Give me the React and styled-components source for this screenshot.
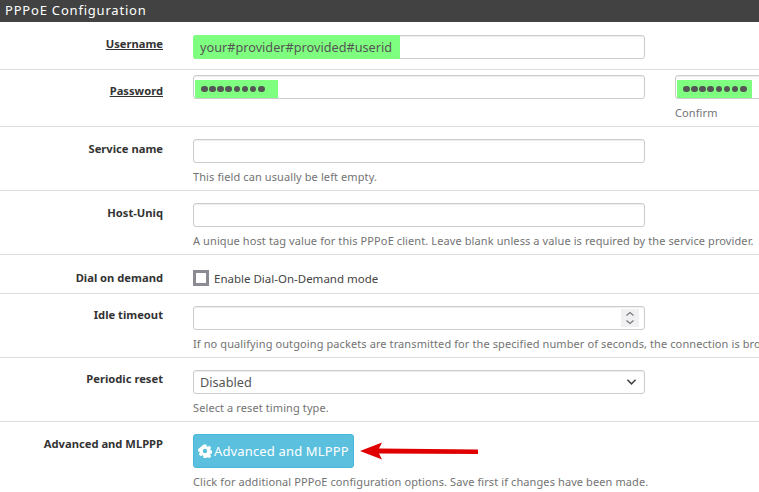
import React from "react";
import styled, { createGlobalStyle } from "styled-components";

const Global = createGlobalStyle`
html, body {
	margin: 0;
	padding: 0;
	background: #fff;
	overflow: hidden;
}
body {
	font-family: "Noto Sans", "Open Sans", sans-serif;
	font-size: 12px;
	color: #555;
}
`;

const Page = styled.div`
	width: 759px;
	height: 492px;
	overflow: hidden;
`;

const Heading = styled.h2`
	margin: 0;
	height: 22px;
	padding: 0 0 0 5px;
	background: #424242;
	color: #fff;
	font-size: 13px;
	font-weight: 400;
	letter-spacing: 0.8px;
	line-height: 21px;
`;

const Row = styled.div`
	display: grid;
	grid-template-columns: 163px 452px 200px;
	column-gap: 30px;
	height: ${(p) => p.$height}px;
	padding-top: ${(p) => p.$top}px;
	box-sizing: border-box;
	border-bottom: ${(p) => (p.$last ? "0" : "1px solid #ddd")};
	white-space: nowrap;
`;

const Label = styled.label`
	justify-self: end;
	align-self: start;
	margin-top: ${(p) => p.$drop || 0}px;
	color: #333;
	font-size: 11.2px;
	font-weight: 700;
	line-height: 18px;
	text-decoration: ${(p) => (p.$required ? "underline" : "none")};
`;

const Field = styled.div`
	position: relative;
	min-width: 0;
`;

const Input = styled.div`
	box-sizing: border-box;
	width: ${(p) => p.$width || "452px"};
	height: 24px;
	padding: 0 6px;
	border: 1px solid #ccc;
	border-radius: 3px;
	box-shadow: inset 0 1px 1px rgba(0, 0, 0, 0.075);
	background: #fff;
	color: #555;
	font-size: 12.7px;
	line-height: 22px;
	display: flex;
	align-items: center;
	justify-content: space-between;
`;

const FilledText = styled.div`
	box-sizing: border-box;
	width: 207px;
	height: 24px;
	padding-left: 7px;
	border-radius: 3px 0 0 3px;
	background: #7fff7f;
	color: #555;
	font-size: 12.7px;
	line-height: 24px;
	position: absolute;
	left: 0;
	top: 0;
`;

const Dots = styled.div`
	position: absolute;
	left: ${(p) => p.$left}px;
	top: ${(p) => p.$top}px;
	box-sizing: border-box;
	width: ${(p) => p.$width}px;
	height: 18px;
	padding-left: 6px;
	background: #7fff7f;
	display: flex;
	align-items: center;
	gap: 1.67px;
`;

const Dot = styled.i`
	width: 6.5px;
	height: 6.5px;
	border-radius: 50%;
	background: #555;
`;

const Help = styled.div`
	margin-top: 6px;
	font-size: 11px;
	line-height: 15px;
	color: #737373;
	letter-spacing: 0.1px;
`;

const CheckLine = styled.div`
	display: flex;
	align-items: center;
	gap: 5px;
	height: 18px;
	font-size: 11.5px;
	color: #444;
`;

const Box = styled.span`
	box-sizing: border-box;
	width: 16px;
	height: 16px;
	border: 3px solid #8b8b93;
	background: #fff;
`;

const Spin = styled.span`
	width: 18px;
	height: 18px;
	margin-right: -1px;
	background: #f0f0f3;
	display: flex;
	align-items: center;
	justify-content: center;
`;

const Button = styled.button`
	display: flex;
	align-items: center;
	gap: 2px;
	box-sizing: border-box;
	width: 161px;
	height: 34px;
	padding: 0 0 0 4px;
	border: 1px solid #46b8da;
	border-radius: 3px;
	background: #5bc0de;
	color: #fff;
	font-family: inherit;
	font-size: 13px;
	letter-spacing: 0.15px;
	white-space: nowrap;
	svg {
		flex-shrink: 0;
	}
`;

const Arrow = styled.svg`
	position: absolute;
	left: 166px;
	top: 7px;
	width: 122px;
	height: 20px;
`;

const Mask = () => (
	<>
		{Array.from({ length: 8 }).map((_, i) => (
			<Dot key={i} />
		))}
	</>
);

const Gear = () => (
	<svg width="14" height="14" viewBox="0 0 24 24" fill="#fff">
		<path fillRule="evenodd" d="M9.6 1h4.8l.6 3.1 1.7.7 2.6-1.8 3.4 3.4-1.8 2.6.7 1.7 3.1.6v4.8l-3.1.6-.7 1.7 1.8 2.6-3.4 3.4-2.6-1.8-1.7.7-.6 3.1H9.6L9 19.9l-1.7-.7-2.6 1.8-3.4-3.4 1.8-2.6-.7-1.7L-.7 13V9.6zM12 8.2a3.8 3.8 0 1 0 0 7.6 3.8 3.8 0 0 0 0-7.6z" />
	</svg>
);

const App = () => {
	return (
		<Page>
			<Global />
			<Heading>PPPoE Configuration</Heading>

			<Row $height={48} $top={13}>
				<Label $required>Username</Label>
				<Field>
					<Input />
					<FilledText>your#provider#provided#userid</FilledText>
				</Field>
			</Row>

			<Row $height={57} $top={5}>
				<Label $required $drop={7}>Password</Label>
				<Field>
					<Input />
					<Dots $left={2} $top={5} $width={83}><Mask /></Dots>
				</Field>
				<Field>
					<Input $width="200px" />
					<Dots $left={2} $top={5} $width={75}><Mask /></Dots>
					<Help>Confirm</Help>
				</Field>
			</Row>

			<Row $height={64} $top={12}>
				<Label $drop={1}>Service name</Label>
				<Field>
					<Input />
					<Help>This field can usually be left empty.</Help>
				</Field>
			</Row>

			<Row $height={64} $top={12}>
				<Label $drop={1}>Host-Uniq</Label>
				<Field>
					<Input />
					<Help>A unique host tag value for this PPPoE client. Leave blank unless a value is required by the service provider.</Help>
				</Field>
			</Row>

			<Row $height={39} $top={14}>
				<Label>Dial on demand</Label>
				<CheckLine>
					<Box />
					Enable Dial-On-Demand mode
				</CheckLine>
			</Row>

			<Row $height={64} $top={12}>
				<Label>Idle timeout</Label>
				<Field>
					<Input>
						<span />
						<Spin>
							<svg width="12" height="16" viewBox="0 0 12 16" fill="none" stroke="#777" strokeWidth="1.2">
								<path d="M2.5 5.5 6 2.5l3.5 3M2.5 10.5 6 13.5l3.5-3" />
							</svg>
						</Spin>
					</Input>
					<Help>If no qualifying outgoing packets are transmitted for the specified number of seconds, the connection is brought down.</Help>
				</Field>
			</Row>

			<Row $height={64} $top={12}>
				<Label>Periodic reset</Label>
				<Field>
					<Input>
						Disabled
						<svg width="11" height="8" viewBox="0 0 12 8" fill="none" stroke="#444" strokeWidth="1.7" style={{ marginRight: 1 }}>
							<path d="m1.5 1.5 4.5 4.5 4.5-4.5" />
						</svg>
					</Input>
					<Help>Select a reset timing type.</Help>
				</Field>
			</Row>

			<Row $height={70} $top={12} $last>
				<Label $drop={1}>Advanced and MLPPP</Label>
				<Field>
					<Button><Gear />Advanced and MLPPP</Button>
					<Arrow viewBox="0 0 122 20">
						<path d="M1 10 L23 1.5 L20 7.5 L119 8.5 L119 13 L20 12.5 L23 18.5 Z" fill="#e00000" />
					</Arrow>
					<Help>Click for additional PPPoE configuration options. Save first if changes have been made.</Help>
				</Field>
			</Row>
		</Page>
	);
};

export default App;
